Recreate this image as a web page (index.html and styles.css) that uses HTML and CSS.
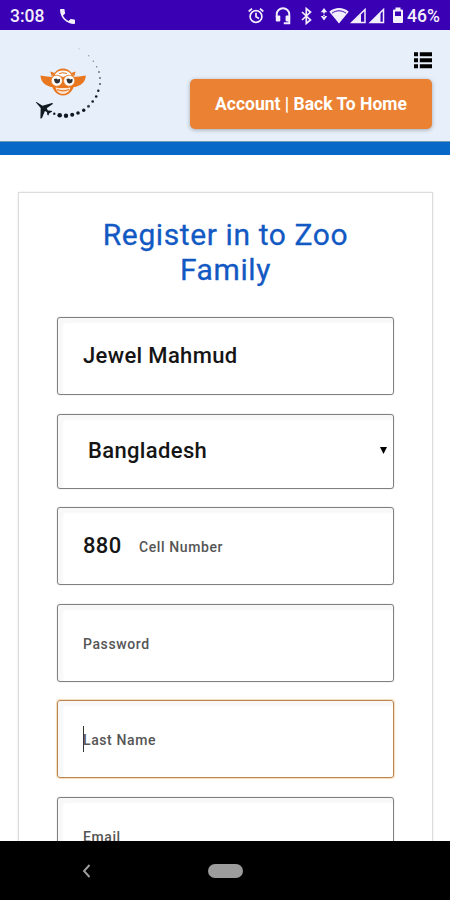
FILE: index.html
```
<!DOCTYPE html>
<html lang="en">
<head>
    <meta charset="UTF-8">
    <meta name="viewport" content="width=device-width, initial-scale=1.0">
    <title>Register</title>
    <link rel="stylesheet" href="styles.css">
</head>
<body>
    <div class="status-bar">
        <span class="status-time">3:08</span>
        <svg class="phone-icon" width="15" height="15" viewBox="3 3 18 18" fill="#f3eefc"><path d="M6.6 10.8c1.4 2.8 3.8 5.1 6.6 6.6l2.2-2.2c.3-.3.7-.4 1-.2 1.1.4 2.3.6 3.6.6.6 0 1 .4 1 1V20c0 .6-.4 1-1 1C10.600 21 3 13.400 3 4c0-.6.4-1 1-1h3.500c.6 0 1 .4 1 1 0 1.300.2 2.500.6 3.600.1.300 0 .7-.2 1z"/></svg>
        <svg class="status-icons" width="158" height="20" viewBox="246 6 158 20" fill="#f3eefc">
            <!-- alarm -->
            <g fill="none" stroke="#f3eefc" stroke-width="1.7">
                <circle cx="256" cy="16.500" r="5.900"/>
                <path d="M256 12.800v4l3 1.700M248.700 11.500l3.300-2.900M263.300 11.500l-3.300-2.900"/>
            </g>
            <!-- headset -->
            <path fill="none" stroke="#f3eefc" stroke-width="1.900" d="M276.700 17v-2.500a6.300 6.300 0 0 1 12.600 0v8.700h-5.500"/>
            <rect x="275.800" y="15.500" width="4.500" height="6" rx="1"/>
            <rect x="285.600" y="15.500" width="4.500" height="6" rx="1"/>
            <!-- bluetooth -->
            <path fill="none" stroke="#f3eefc" stroke-width="1.700" d="M302 12l8.500 8-4.200 3.500V8.500l4.200 3.500-8.500 8"/>
            <!-- wifi -->
            <path d="M324 8l3.200 4.200h-6.400zM324 20.500l3.200-4.500h-6.400zM323.200 11h1.600v2.600h-1.600zM323.200 14.800h1.600v2h-1.600z"/>
            <path d="M329.300 11.800c5.500-5 14-5 19.400 0L339 23.500z"/>
            <path fill="none" stroke="#3a00b3" stroke-width="1" d="M332 13.200c4.200-3.200 9.800-3.200 14 0"/>
            <!-- signal -->
            <path fill="none" stroke="#f3eefc" stroke-width="1.500" d="M365 9.500v13h-13.200z"/>
            <path d="M361 14v8.500h-9z"/>
            <path fill="none" stroke="#f3eefc" stroke-width="1.500" d="M383.500 9.500v13h-13.200z"/>
            <path d="M380.500 12v10.500h-10z"/>
            <!-- battery -->
            <path fill-rule="evenodd" d="M395.500 7.500h5v2h1.500q1 0 1 1v11.500q0 1-1 1h-8q-1 0-1-1v-11.500q0-1 1-1h1.500zM395 11.500v4.500h6v-4.500z"/>
        </svg>
        <span class="status-battery">46%</span>
    </div>

    <div class="header">
        <svg class="logo" width="80" height="80" viewBox="28 43 80 80">
            <g fill="#101820">
                <circle cx="79" cy="48.700" r=".5" opacity=".35"/>
                <circle cx="88.700" cy="55.700" r=".7" opacity=".4"/>
                <circle cx="93.300" cy="61.300" r=".7" opacity=".5"/>
                <circle cx="96.700" cy="66.700" r=".8" opacity=".55"/>
                <circle cx="99" cy="72" r=".9" opacity=".6"/>
                <circle cx="100" cy="78" r="1" opacity=".6"/>
                <circle cx="100" cy="84" r="1" opacity=".7"/>
                <circle cx="98.300" cy="90.700" r="1.200"/>
                <circle cx="96.200" cy="96.500" r="1.300"/>
                <circle cx="92.700" cy="101.500" r="1.300"/>
                <circle cx="88.500" cy="106.300" r="1.500" opacity=".8"/>
                <circle cx="83.700" cy="110.300" r="1.700"/>
                <circle cx="78" cy="113" r="1.800"/>
                <circle cx="72.200" cy="114.800" r="2"/>
                <circle cx="66" cy="115.700" r="2.200"/>
                <circle cx="59.700" cy="115.200" r="2.300"/>
                <circle cx="54.300" cy="113.700" r="1.200"/>
                <path d="M36 102.500q-.5-.8.5-.5l6 3.700 9.500-2.700 1.200.8-6.500 4.400 1.200 2.200 3.500.3.900.7-3 1.800-.9 2.300-1-.4-.5-3-2-1-3 7.200-1.500.3.300-10.700z"/>
            </g>
            <!-- ears and head -->
            <path fill="#e8771f" d="M53 77q-6-.5-12.500-1.500 0 6 5.500 9.500 4 2.300 8.500 2.500zM73 77q6-.5 12.800-1.500 0 6-5.500 9.500-4 2.300-8.800 2.500z"/>
            <path fill="#e8771f" d="M50.300 71.500l4.500 1.500-3 3.500zM75.700 71.500l-4.500 1.500 3 3.500z"/>
            <ellipse cx="63" cy="82" rx="11.500" ry="13.500" fill="#e8771f"/>
            <path fill="#f8fafe" d="M54.500 75.500q2-5 8.500-5t8.500 5l-3.500-.5-5 2-5-2z"/>
            <path fill="none" stroke="#e8771f" d="M59 73.500q4-1.500 8 0"/>
            <circle cx="56.800" cy="80.700" r="5.500" fill="#fff" stroke="#e8771f" stroke-width=".6"/>
            <circle cx="69.200" cy="80.700" r="5.500" fill="#fff" stroke="#e8771f" stroke-width=".6"/>
            <path fill="#303038" d="M54 79l2.300-.5 1.500 1 2.200-.7q.6 4.600-2.700 4.700-2.900 0-3.300-4.500zM66.500 79l2.300-.5 1.500 1 2.200-.7q.6 4.600-2.700 4.700-2.900 0-3.300-4.500z"/>
            <path fill="#fbe6d5" d="M55.500 87.500q7.500 1 15 0-1.500 6.500-7.500 6.500t-7.500-6.500z"/>
            <path fill="none" stroke="#e8771f" stroke-width="1.100" d="M57 89.500q6 2.800 12 0"/>
        </svg>
        <div class="header-right">
            <svg class="menu-icon" width="18" height="17" viewBox="0 0 18 17"><path d="M0 .3h4v4H0zM5.800.3H18v4H5.800zM0 6.300h4v4H0zM5.800 6.300H18v4H5.800zM0 12.300h4v4H0zM5.800 12.300H18v4H5.800z"/></svg>
            <a class="home-button">Account | Back To Home</a>
        </div>
    </div>

    <div class="content">
        <div class="register-card">
            <h1>Register in to Zoo Family</h1>
            <div class="field"><span class="value">Jewel Mahmud</span></div>
            <div class="field select">
                <span class="value">Bangladesh</span>
                <svg width="7" height="7" viewBox="0 0 7 7"><path d="M0 0h7L3.500 7z"/></svg>
            </div>
            <div class="field"><span class="value code">880</span><span class="placeholder">Cell Number</span></div>
            <div class="field"><span class="placeholder">Password</span></div>
            <div class="field focused"><span class="caret"></span><span class="placeholder">Last Name</span></div>
            <div class="field"><span class="placeholder">Email</span></div>
        </div>
    </div>

    <div class="nav-bar">
        <svg class="back-icon" width="9" height="14" viewBox="0 0 9 14"><path d="M7.500 1L2 7l5.500 6" fill="none" stroke="#a0a0a0" stroke-width="1.900"/></svg>
        <div class="home-pill"></div>
    </div>
</body>
</html>
```
FILE: styles.css
```
* {
    box-sizing: border-box;
}

body {
    font-family: Roboto, sans-serif;
    display: flex;
    flex-direction: column;
    height: 900px;
    margin: 0;
    overflow: hidden;
    background: white;
}

.status-bar {
    display: flex;
    align-items: center;
    flex: none;
    height: 30px;
    padding: 2px 9px 0 10px;
    background: #3a00b3;
    color: #f3eefc;
    font-size: 17.5px;
    font-weight: 500;
}

.status-time {
    width: 50px;
}

.status-icons {
    margin-left: auto;
    margin-right: 3px;
    margin-top: -1px;
}

.status-battery {
    width: 34px;
    white-space: nowrap;
}

.header {
    display: flex;
    justify-content: space-between;
    flex: none;
    height: 125px;
    padding: 13px 18px 0 28px;
    background: #e7effa;
    border-bottom: 13px solid #0868c8;
    box-shadow: inset 0 -1px 0 #6f98b8;
}

.header-right {
    display: flex;
    flex-direction: column;
    align-items: flex-end;
    padding-top: 9px;
}

.home-button {
    width: 242px;
    height: 50px;
    margin-top: 10px;
    border-radius: 5px;
    background: #eb8132;
    box-shadow: 0 1px 4px rgba(0, 0, 0, 0.3);
    color: white;
    font-size: 17.5px;
    font-weight: 700;
    line-height: 50px;
    text-align: center;
}

.content {
    flex: 1;
    min-height: 0;
    padding: 37px 17px 0 18px;
    overflow: hidden;
}

.register-card {
    padding: 25px 38px 0;
    border: 1px solid #dcdcdc;
    box-shadow: 0 0 2px rgba(0, 0, 0, 0.1);
}

h1 {
    width: 270px;
    margin: 0 auto 30px;
    color: #1259c3;
    font-size: 30px;
    font-weight: 400;
    letter-spacing: 0.6px;
    line-height: 34.5px;
    text-align: center;
    -webkit-text-stroke: 0.3px #1259c3;
}

.field {
    display: flex;
    align-items: center;
    height: 78px;
    margin-bottom: 18.5px;
    padding: 0 0 1px 25px;
    border: 1px solid #808080;
    border-radius: 3px;
    box-shadow: inset 5px 5px 2px #f8f8f8, 0 0 1px #999;
}

.select {
    justify-content: space-between;
    height: 75px;
    padding: 0 6px 1px 30px;
}

.value {
    color: #151515;
    font-size: 22px;
    font-weight: 500;
    letter-spacing: 0.35px;
}

.code {
    width: 56px;
}

.placeholder {
    padding-top: 3px;
    color: #555;
    font-size: 14px;
    font-weight: 500;
    letter-spacing: 0.6px;
}

.focused {
    border-color: #b98652;
    box-shadow: inset 5px 5px 2px #f8f8f8, 0 0 1px 1px #f6ddb8;
}

.caret {
    width: 1px;
    height: 26px;
    margin-right: -1px;
    background: #333;
}

.nav-bar {
    display: flex;
    align-items: center;
    flex: none;
    height: 59px;
    padding-left: 82px;
    background: black;
}

.home-pill {
    width: 35px;
    height: 14px;
    margin-left: 117px;
    border-radius: 7px;
    background: #9c9c9c;
}
```
